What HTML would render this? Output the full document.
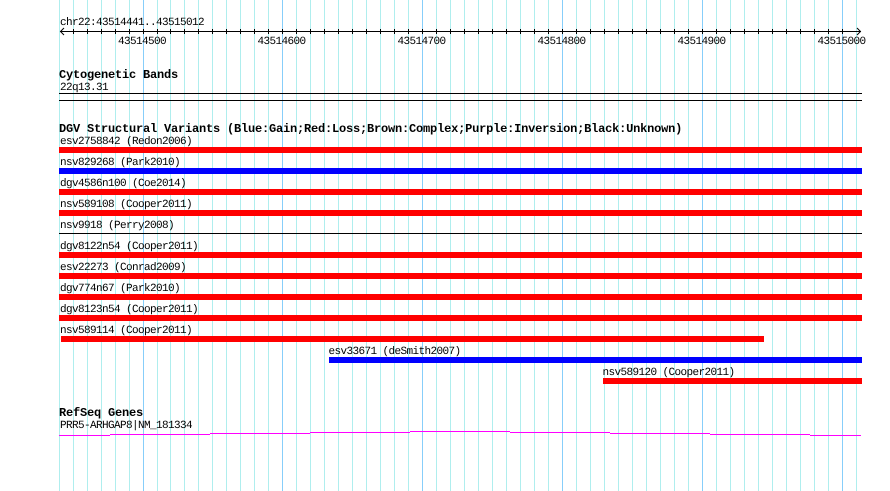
<!DOCTYPE html>
<html>
<head>
<meta charset="utf-8">
<style>
html,body{margin:0;padding:0;background:#fff;}
svg{display:block;}
text{font-family:"Liberation Mono","DejaVu Sans Mono",monospace;fill:#000;white-space:pre;}
.r{font-size:11px;letter-spacing:-0.6px;text-rendering:geometricPrecision;}
.b{font-size:12px;font-weight:bold;letter-spacing:-0.2px;}
</style>
</head>
<body>
<svg width="890" height="491" viewBox="0 0 890 491" xmlns="http://www.w3.org/2000/svg">
<g shape-rendering="crispEdges" fill="none">
<path stroke="#afeeee" d="M59.5 0V491M73.5 0V491M87.5 0V491M101.5 0V491M115.5 0V491M129.5 0V491M157.5 0V491M170.5 0V491M184.5 0V491M198.5 0V491M212.5 0V491M226.5 0V491M240.5 0V491M254.5 0V491M268.5 0V491M296.5 0V491M310.5 0V491M324.5 0V491M338.5 0V491M352.5 0V491M366.5 0V491M380.5 0V491M394.5 0V491M408.5 0V491M436.5 0V491M450.5 0V491M464.5 0V491M478.5 0V491M492.5 0V491M506.5 0V491M520.5 0V491M534.5 0V491M548.5 0V491M576.5 0V491M590.5 0V491M604.5 0V491M618.5 0V491M632.5 0V491M646.5 0V491M660.5 0V491M674.5 0V491M688.5 0V491M716.5 0V491M730.5 0V491M744.5 0V491M758.5 0V491M772.5 0V491M786.5 0V491M800.5 0V491M814.5 0V491M828.5 0V491M856.5 0V491"/>
<path stroke="#87cefa" d="M143.5 0V491M282.5 0V491M422.5 0V491M562.5 0V491M702.5 0V491M842.5 0V491"/>
<path stroke="#000" d="M60 31.5H861M73.5 29V34M87.5 29V34M101.5 29V34M115.5 29V34M129.5 29V34M143.5 29V34M157.5 29V34M170.5 29V34M184.5 29V34M198.5 29V34M212.5 29V34M226.5 29V34M240.5 29V34M254.5 29V34M268.5 29V34M282.5 29V34M296.5 29V34M310.5 29V34M324.5 29V34M338.5 29V34M352.5 29V34M366.5 29V34M380.5 29V34M394.5 29V34M408.5 29V34M422.5 29V34M436.5 29V34M450.5 29V34M464.5 29V34M478.5 29V34M492.5 29V34M506.5 29V34M520.5 29V34M534.5 29V34M548.5 29V34M562.5 29V34M576.5 29V34M590.5 29V34M604.5 29V34M618.5 29V34M632.5 29V34M646.5 29V34M660.5 29V34M674.5 29V34M688.5 29V34M702.5 29V34M716.5 29V34M730.5 29V34M744.5 29V34M758.5 29V34M772.5 29V34M786.5 29V34M800.5 29V34M814.5 29V34M828.5 29V34M842.5 29V34"/>
<path stroke="#000" d="M59 93.5H862M59 100.5H862M59 233.5H862"/>
</g>
<path d="M64 28L60.5 31.5L64 35M857 28L860.5 31.5L857 35" fill="none" stroke="#000" stroke-width="1"/>
<g shape-rendering="crispEdges">
<rect x="59" y="147" width="803" height="6" fill="#f00"/>
<rect x="59" y="168" width="803" height="6" fill="#00f"/>
<rect x="59" y="189" width="803" height="6" fill="#f00"/>
<rect x="59" y="210" width="803" height="6" fill="#f00"/>
<rect x="59" y="252" width="803" height="6" fill="#f00"/>
<rect x="59" y="273" width="803" height="6" fill="#f00"/>
<rect x="59" y="294" width="803" height="6" fill="#f00"/>
<rect x="59" y="315" width="803" height="6" fill="#f00"/>
<rect x="61" y="336" width="703" height="6" fill="#f00"/>
<rect x="329" y="357" width="533" height="6" fill="#00f"/>
<rect x="603" y="378" width="259" height="6" fill="#f00"/>
<path fill="none" stroke="#f0f" d="M59 435.5H110M110 434.5H210M210 433.5H310M310 432.5H410M410 431.5H510M510 432.5H610M610 433.5H710M710 434.5H810M810 435.5H861"/>
</g>
<text class="r" x="60" y="25">chr22:43514441..43515012</text>
<text class="r" x="118" y="44">43514500</text>
<text class="r" x="257.5" y="44">43514600</text>
<text class="r" x="397.5" y="44">43514700</text>
<text class="r" x="537.5" y="44">43514800</text>
<text class="r" x="677.5" y="44">43514900</text>
<text class="r" x="817.5" y="44">43515000</text>
<text class="b" x="59" y="78">Cytogenetic Bands</text>
<text class="r" x="60" y="90">22q13.31</text>
<text class="b" x="59" y="132">DGV Structural Variants (Blue:Gain;Red:Loss;Brown:Complex;Purple:Inversion;Black:Unknown)</text>
<text class="r" x="60" y="144">esv2758842 (Redon2006)</text>
<text class="r" x="60" y="165">nsv829268 (Park2010)</text>
<text class="r" x="60" y="186">dgv4586n100 (Coe2014)</text>
<text class="r" x="60" y="207">nsv589108 (Cooper2011)</text>
<text class="r" x="60" y="228">nsv9918 (Perry2008)</text>
<text class="r" x="60" y="249">dgv8122n54 (Cooper2011)</text>
<text class="r" x="60" y="270">esv22273 (Conrad2009)</text>
<text class="r" x="60" y="291">dgv774n67 (Park2010)</text>
<text class="r" x="60" y="312">dgv8123n54 (Cooper2011)</text>
<text class="r" x="60" y="333">nsv589114 (Cooper2011)</text>
<text class="r" x="328.5" y="354">esv33671 (deSmith2007)</text>
<text class="r" x="602.5" y="375">nsv589120 (Cooper2011)</text>
<text class="b" x="59" y="416">RefSeq Genes</text>
<text class="r" x="60" y="428">PRR5-ARHGAP8|NM_181334</text>
</svg>
</body>
</html>
